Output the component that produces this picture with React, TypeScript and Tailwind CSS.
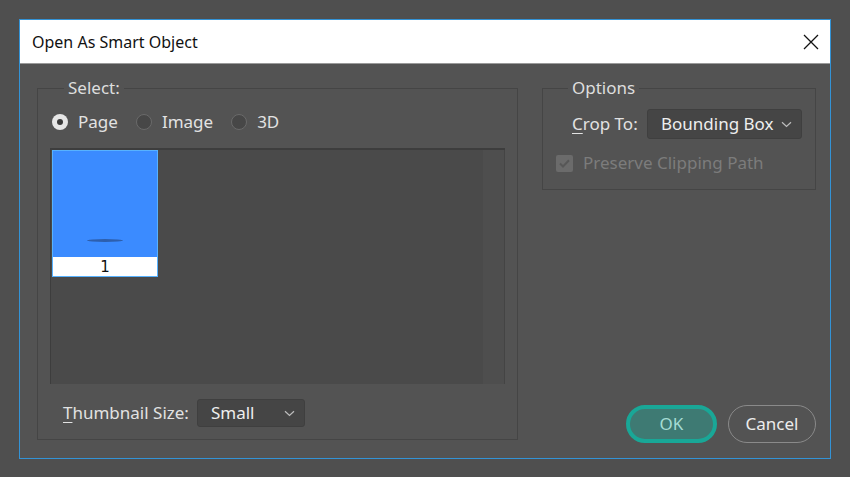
import React from 'react';

const font = { fontFamily: '"Noto Sans", "Open Sans", "DejaVu Sans", sans-serif' };

function Radio({ label, checked }: { label: string; checked?: boolean }) {
  return (
    <label className="flex items-center gap-[10px]">
      {checked ? (
        <span className="flex h-[16px] w-[16px] items-center justify-center rounded-full bg-[#e6e6e6]">
          <span className="h-[6px] w-[6px] rounded-full bg-[#3a3a3a]" />
        </span>
      ) : (
        <span className="h-[16px] w-[16px] rounded-full border border-[#6a6a6a] bg-[#474747]" />
      )}
      <span className="text-[17px] leading-[22px] text-[#e2e2e2]">{label}</span>
    </label>
  );
}

function Chevron() {
  return (
    <svg width="11" height="7" viewBox="0 0 11 7" fill="none">
      <path d="M1 1.2 L5.5 5.5 L10 1.2" stroke="#bdbdbd" strokeWidth="1.2" />
    </svg>
  );
}

function Select({ value, className }: { value: string; className: string }) {
  return (
    <div
      className={`flex items-center justify-between rounded-[3px] border border-[#3f3f3f] bg-[#454545] pl-[13px] pr-[9px] ${className}`}
    >
      <span className="text-[17px] leading-[22px] text-[#eeeeee]">{value}</span>
      <Chevron />
    </div>
  );
}

export default function App() {
  return (
    <div className="h-[477px] w-[850px] overflow-hidden bg-[#4f4f4f] pl-[19px] pt-[19px]" style={font}>
      <div className="flex h-[440px] w-[812px] flex-col border border-[#3393d6] bg-[#535353]">
        {/* title bar */}
        <div className="flex h-[44px] shrink-0 items-center justify-between border-b border-[#9a9a9a] bg-white pl-[12px] pr-[9px]">
          <span className="text-[16px] leading-[22px] text-[#111]">Open As Smart Object</span>
          <svg width="16" height="16" viewBox="0 0 16 16" className="mr-[2px]">
            <path d="M1 1 L15 15 M15 1 L1 15" stroke="#111" strokeWidth="1.3" />
          </svg>
        </div>

        {/* body */}
        <div className="flex flex-1 gap-[24px] pl-[17px] pr-[14px] pt-[13px]">
          {/* Select group */}
          <fieldset className="mb-[18px] flex w-[481px] shrink-0 flex-col border border-[#454545] px-[12px] pb-[11px]">
            <legend className="ml-[14px] px-[4px] text-[17px] leading-[22px] text-[#dedede]">Select:</legend>
            <div className="ml-[2px] mt-[12px] flex items-center gap-[18px]">
              <Radio label="Page" checked />
              <Radio label="Image" />
              <Radio label="3D" />
            </div>

            <div className="mt-[15px] flex h-[236px] border-l border-t-2 border-[#3d3d3d] bg-[#4a4a4a]">
              <div className="flex-1 pl-[1px]">
                <div className="flex h-[127px] w-[106px] flex-col border border-[#57b2ff] bg-[#3b8bff]">
                  <div className="flex flex-1 items-end justify-center pb-[15px]">
                    <div className="h-[3px] w-[36px] rounded-[50%] bg-[#2d5fae]" />
                  </div>
                  <div
                    className="flex h-[19px] items-center justify-center bg-white pt-[2px] text-[15px] text-[#111]"
                    style={{ fontFamily: '"DejaVu Sans", sans-serif' }}
                  >
                    1
                  </div>
                </div>
              </div>
              <div className="w-[22px] border-r border-[#444] bg-[#4e4e4e]" />
            </div>

            <div className="mt-[15px] flex items-center gap-[8px] pl-[13px]">
              <span className="text-[17px] leading-[22px] text-[#e2e2e2]">
                <span className="underline underline-offset-[3px]">T</span>humbnail Size:
              </span>
              <Select value="Small" className="h-[28px] w-[108px]" />
            </div>
          </fieldset>

          {/* right column */}
          <div className="flex flex-1 flex-col">
            <fieldset className="flex flex-col border border-[#454545] pb-[15px] pl-[29px] pr-[13px]">
              <legend className="-ml-[4px] px-[4px] text-[17px] leading-[22px] text-[#dedede]">Options</legend>
              <div className="mt-[10px] flex items-center justify-between">
                <span className="text-[17px] leading-[22px] text-[#e2e2e2]">
                  <span className="underline underline-offset-[3px]">C</span>rop To:
                </span>
                <Select value="Bounding Box" className="h-[30px] w-[155px]" />
              </div>
              <div className="-ml-[16px] mt-[13px] flex items-center gap-[10px]">
                <span className="flex h-[17px] w-[17px] items-center justify-center rounded-[2px] bg-[#6b6b6b]">
                  <svg width="11" height="9" viewBox="0 0 11 9">
                    <path d="M1 4.5 L4 7.5 L10 1.2" stroke="#575757" strokeWidth="2" fill="none" />
                  </svg>
                </span>
                <span className="text-[17px] leading-[22px] text-[#7c7c7c]">Preserve Clipping Path</span>
              </div>
            </fieldset>

            <div className="mb-[15px] mt-auto flex justify-end gap-[11px]">
              <button className="flex h-[38px] w-[91px] items-center justify-center rounded-full border-[4px] border-[#19a797] bg-[#3e7a73] text-[17px] text-[#a5dcd4]">
                OK
              </button>
              <button className="flex h-[38px] w-[88px] items-center justify-center rounded-full border border-[#8a8a8a] text-[17px] text-[#ececec]">
                Cancel
              </button>
            </div>
          </div>
        </div>
      </div>
    </div>
  );
}
